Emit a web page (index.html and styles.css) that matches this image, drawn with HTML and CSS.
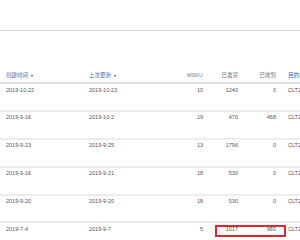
FILE: index.html
```html
<!DOCTYPE html>
<html lang="zh-CN">
  <head>
    <meta charset="UTF-8" />
    <meta name="viewport" content="width=device-width, initial-scale=1.0" />
    <title>发货单</title>
    <link rel="stylesheet" href="styles.css">
  </head>
  <body>
    <div class="toolbar"></div>
    <div class="list">
      <div class="row head">
        <span class="cell date sort">创建时间 <i class="caret"></i></span>
        <span class="cell date sort">上次更新 <i class="caret"></i></span>
        <span class="cell msku">MSKU</span>
        <span class="cell num">已发货</span>
        <span class="cell num">已收到</span>
        <span class="cell dest sort">目的地</span>
      </div>
      <div class="row">
        <span class="cell date">2019-10-22</span>
        <span class="cell date">2019-10-23</span>
        <span class="cell msku">10</span>
        <span class="cell num">1240</span>
        <span class="cell num">0</span>
        <span class="cell dest">CLT2</span>
      </div>
      <div class="row">
        <span class="cell date">2019-9-16</span>
        <span class="cell date">2019-10-2</span>
        <span class="cell msku">19</span>
        <span class="cell num">470</span>
        <span class="cell num">468</span>
        <span class="cell dest">CLT2</span>
      </div>
      <div class="row">
        <span class="cell date">2019-9-23</span>
        <span class="cell date">2019-9-25</span>
        <span class="cell msku">13</span>
        <span class="cell num">1796</span>
        <span class="cell num">0</span>
        <span class="cell dest">CLT2</span>
      </div>
      <div class="row">
        <span class="cell date">2019-9-16</span>
        <span class="cell date">2019-9-21</span>
        <span class="cell msku">18</span>
        <span class="cell num">530</span>
        <span class="cell num">0</span>
        <span class="cell dest">CLT2</span>
      </div>
      <div class="row">
        <span class="cell date">2019-9-20</span>
        <span class="cell date">2019-9-20</span>
        <span class="cell msku">18</span>
        <span class="cell num">530</span>
        <span class="cell num">0</span>
        <span class="cell dest">CLT2</span>
      </div>
      <div class="row">
        <span class="cell date">2019-7-4</span>
        <span class="cell date">2019-9-7</span>
        <span class="cell msku">5</span>
        <span class="cell num">1017</span>
        <span class="cell num">980</span>
        <span class="cell dest">CLT2</span>
        <span class="mark"></span>
      </div>
    </div>
  </body>
</html>
```
FILE: styles.css
```css
body {
  margin: 0;
  padding: 0;
  background: white;
  font-family: "Liberation Sans", Arial, "Noto Sans CJK SC", sans-serif;
  font-size: 5.5px;
  color: #555;
  overflow: hidden;
}
.toolbar {
  height: 30px;
  border-bottom: 1px solid #d8d8d8;
}
.list {
  width: 340px;
  margin-top: 39px;
}
.row {
  position: relative;
  display: flex;
  align-items: flex-start;
  height: 24.4px;
  padding-top: 1.5px;
  border-bottom: 2px solid #ececec;
}
.row.head {
  height: 11px;
  padding-top: 1px;
  border-bottom: 2px solid #dedede;
  color: #777;
}
.cell {
  display: block;
  white-space: nowrap;
  line-height: 8px;
}
.date {
  width: 77px;
  padding-left: 6px;
}
.msku {
  width: 37px;
  text-align: right;
}
.num {
  width: 35px;
  padding-right: 3px;
  text-align: right;
}
.dest {
  padding-left: 9px;
}
.sort {
  color: #3468b0;
}
.caret {
  display: inline-block;
  width: 0;
  height: 0;
  margin-left: 1px;
  vertical-align: middle;
  border-left: 1.5px solid transparent;
  border-right: 1.5px solid transparent;
  border-top: 2px solid #333;
}
.mark {
  position: absolute;
  top: 2px;
  left: 215px;
  width: 67px;
  height: 8px;
  border: 2px solid #e0282c;
}
```
